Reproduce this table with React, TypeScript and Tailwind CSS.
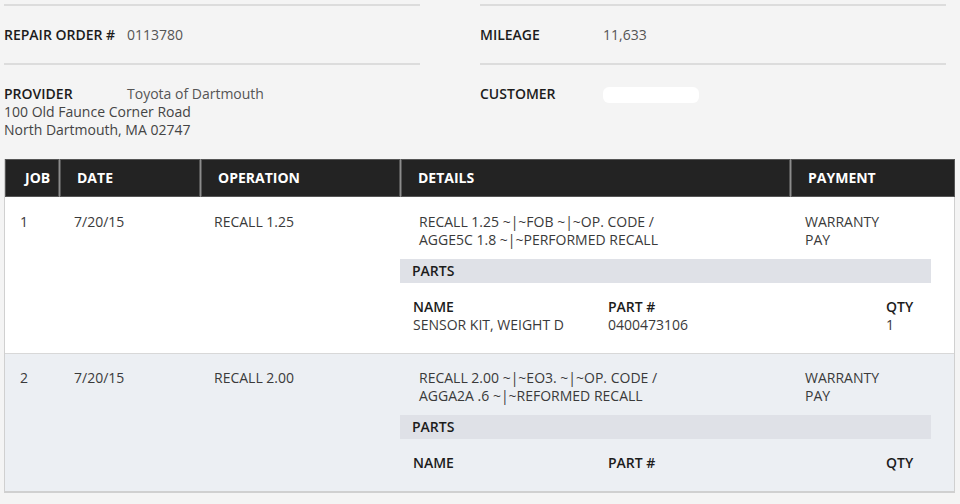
import React from "react";

const font = { fontFamily: '"Open Sans", "Liberation Sans", sans-serif' };

function InfoRow({ label, value }: { label: string; value: React.ReactNode }) {
  return (
    <div className="flex items-start">
      <div className="w-[123px] shrink-0 font-semibold text-[#1c1c1c]">{label}</div>
      <div className="text-[#555]">{value}</div>
    </div>
  );
}

type Part = { name: string; num: string; qty: string };
type Job = {
  job: string;
  date: string;
  op: string;
  details: string[];
  pay: string[];
  parts: Part[];
  rowCls: string;
};

const jobs: Job[] = [
  {
    job: "1",
    date: "7/20/15",
    op: "RECALL 1.25",
    details: ["RECALL 1.25 ~|~FOB ~|~OP. CODE /", "AGGE5C 1.8 ~|~PERFORMED RECALL"],
    pay: ["WARRANTY", "PAY"],
    parts: [{ name: "SENSOR KIT, WEIGHT D", num: "0400473106", qty: "1" }],
    rowCls: "bg-white border-b border-[#d8d8d8] pt-[16px] pb-[19px]",
  },
  {
    job: "2",
    date: "7/20/15",
    op: "RECALL 2.00",
    details: ["RECALL 2.00 ~|~EO3. ~|~OP. CODE /", "AGGA2A .6 ~|~REFORMED RECALL"],
    pay: ["WARRANTY", "PAY"],
    parts: [],
    rowCls: "bg-[#eceff3] pt-[15px] pb-[19px]",
  },
];

const cols = "grid grid-cols-[54px_141px_200px_390px_165px]";

export default function App() {
  return (
    <div className="min-h-[504px] w-[960px] bg-[#f4f4f4] text-[14px] leading-[18px]" style={font}>
      {/* top info */}
      <div className="flex pl-[4px] pt-[4px]">
        <div className="w-[416px]">
          <div className="h-[2px] bg-[#dcdcdc]" />
          <div className="h-[57px] pt-[20px]">
            <InfoRow label="REPAIR ORDER #" value="0113780" />
          </div>
          <div className="h-[2px] bg-[#dcdcdc]" />
          <div className="pt-[20px]">
            <InfoRow label="PROVIDER" value="Toyota of Dartmouth" />
            <div className="text-[#444]">100 Old Faunce Corner Road</div>
            <div className="text-[#444]">North Dartmouth, MA 02747</div>
          </div>
        </div>
        <div className="ml-[60px] w-[466px]">
          <div className="h-[2px] bg-[#dcdcdc]" />
          <div className="h-[57px] pt-[20px]">
            <InfoRow label="MILEAGE" value="11,633" />
          </div>
          <div className="h-[2px] bg-[#dcdcdc]" />
          <div className="pt-[20px]">
            <InfoRow
              label="CUSTOMER"
              value={<div className="mt-[2px] h-[16px] w-[96px] rounded-[6px] bg-white" />}
            />
          </div>
        </div>
      </div>

      {/* table */}
      <div className="ml-[4px] mt-[20px] w-[951px] border-b-2 border-l border-r border-[#d0d0d0]">
        <div className={`${cols} h-[38px] bg-[#8c8c8c] font-bold text-white`}>
          {["JOB", "DATE", "OPERATION", "DETAILS", "PAYMENT"].map((h, i) => (
            <div
              key={h}
              className={`flex items-center border border-[#555] bg-[#232323] ${i === 0 ? "pl-[19px]" : "ml-[1px] pl-[16px]"}`}
            >
              {h}
            </div>
          ))}
        </div>
        {jobs.map((j) => (
          <div key={j.job} className={`${cols} ${j.rowCls} text-[#3a3a3a]`}>
            <div className="row-span-2 pl-[15px]">{j.job}</div>
            <div className="row-span-2 pl-[15px]">{j.date}</div>
            <div className="row-span-2 pl-[14px]">{j.op}</div>
            <div className="pl-[19px]">
              {j.details.map((d) => (
                <div key={d}>{d}</div>
              ))}
            </div>
            <div className="pl-[15px]">
              {j.pay.map((d) => (
                <div key={d}>{d}</div>
              ))}
            </div>
            <div className="col-span-2 mt-[10px] mr-[24px]">
              <div className="flex h-[24px] items-center bg-[#dfe1e7] pl-[12px] font-semibold text-[#1c1c1c]">
                PARTS
              </div>
              <div className="mt-[15px] grid grid-cols-[195px_278px_1fr] pl-[13px]">
                <div className="font-semibold text-[#1c1c1c]">NAME</div>
                <div className="font-semibold text-[#1c1c1c]">PART #</div>
                <div className="font-semibold text-[#1c1c1c]">QTY</div>
                {j.parts.map((p) => (
                  <React.Fragment key={p.num}>
                    <div>{p.name}</div>
                    <div>{p.num}</div>
                    <div>{p.qty}</div>
                  </React.Fragment>
                ))}
              </div>
            </div>
          </div>
        ))}
      </div>
    </div>
  );
}
